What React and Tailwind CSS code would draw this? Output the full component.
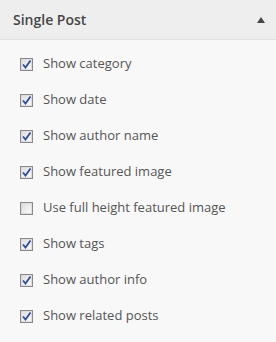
import React from 'react';

const options = [
  { label: 'Show category', checked: true },
  { label: 'Show date', checked: true },
  { label: 'Show author name', checked: true },
  { label: 'Show featured image', checked: true },
  { label: 'Use full height featured image', checked: false },
  { label: 'Show tags', checked: true },
  { label: 'Show author info', checked: true },
  { label: 'Show related posts', checked: true },
];

const Checkbox = ({ checked }) => (
  <span className="relative flex h-[13px] w-[13px] shrink-0 items-center justify-center border border-[#8a8a8a] bg-[#dcdcdc]">
    <span className="absolute inset-[1px] bg-gradient-to-br from-[#dedede] to-[#fbfbfb]" />
    {checked && (
      <svg className="relative" width="11" height="11" viewBox="0 0 11 11">
        <path d="M2 5.5 L4.5 8.5 L9.5 1.5" fill="none" stroke="#2c4c9c" strokeWidth="1.8" />
      </svg>
    )}
  </span>
);

export default function App() {
  return (
    <div className="w-[276px] h-[342px] bg-[#f8f8f8] font-['Open_Sans',sans-serif]">
      <div className="flex h-[40px] items-center justify-between border-b border-[#e1e1e1] bg-[#eeeeee] pl-[13px] pr-[11px]">
        <span className="text-[14px] font-semibold text-[#464646]">Single Post</span>
        <svg width="8" height="6" viewBox="0 0 8 6">
          <path d="M0 6 L4 0 L8 6 Z" fill="#464646" />
        </svg>
      </div>
      <div className="pt-[6px]">
        {options.map((opt) => (
          <label key={opt.label} className="flex h-[36px] items-center gap-[10px] pl-[20px]">
            <Checkbox checked={opt.checked} />
            <span className="text-[13px] text-[#555555]">{opt.label}</span>
          </label>
        ))}
      </div>
    </div>
  );
}
